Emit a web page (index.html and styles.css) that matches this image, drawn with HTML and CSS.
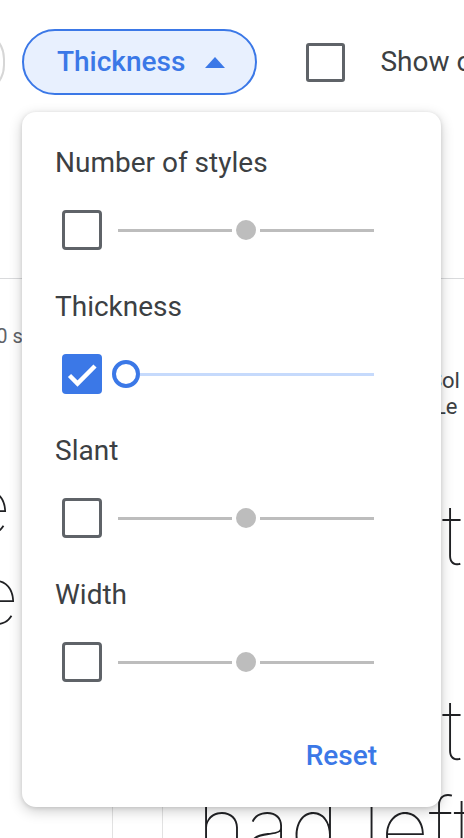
FILE: index.html
```html
<!DOCTYPE html>
<html lang="en">
<head>
<meta charset="utf-8">
<title>Font filters</title>
<link rel="stylesheet" href="styles.css">
</head>
<body>
<div class="page">
  <header class="toolbar">
    <button class="chip chip-prev" aria-label="Previous filter"></button>
    <button class="chip chip-active">Thickness
      <svg class="caret" viewBox="0 0 20 11" aria-hidden="true"><polygon points="10,0 20,11 0,11"/></svg>
    </button>
    <label class="toggle"><span class="box"></span><span class="toggle-text">Show only variable fonts</span></label>
  </header>

  <div class="divider"></div>

  <main class="grid">
    <article class="card card-left">
      <div class="meta meta-left">10 styles</div>
      <div class="sample sample-left">
        <div class="ln ln-a">the</div>
        <div class="ln ln-b">the</div>
      </div>
    </article>
    <article class="card card-mid">
      <div class="meta meta-mid">
        <div>Sol</div>
        <div class="meta-l2">Le</div>
      </div>
      <div class="sample sample-mid">
        <div class="ln ln-t">the</div>
        <div class="ln ln-empty">&nbsp;</div>
        <div class="ln ln-t">to</div>
        <div class="ln">had left</div>
      </div>
    </article>
  </main>

  <section class="popup" aria-label="Thickness filters">
    <div class="group">
      <div class="group-label">Number of styles</div>
      <div class="control">
        <span class="check"></span>
        <div class="slider">
          <span class="track"></span><span class="thumb"></span><span class="track"></span>
        </div>
      </div>
    </div>
    <div class="group">
      <div class="group-label">Thickness</div>
      <div class="control">
        <span class="check checked"><svg viewBox="0 0 40 40" aria-hidden="true"><path d="M7.5 21.5 L15.5 29.5 L33 12"/></svg></span>
        <div class="slider slider-on">
          <span class="ring"></span><span class="track track-on"></span>
        </div>
      </div>
    </div>
    <div class="group">
      <div class="group-label">Slant</div>
      <div class="control">
        <span class="check"></span>
        <div class="slider">
          <span class="track"></span><span class="thumb"></span><span class="track"></span>
        </div>
      </div>
    </div>
    <div class="group">
      <div class="group-label">Width</div>
      <div class="control">
        <span class="check"></span>
        <div class="slider">
          <span class="track"></span><span class="thumb"></span><span class="track"></span>
        </div>
      </div>
    </div>
    <div class="actions"><button class="reset">Reset</button></div>
  </section>
</div>
</body>
</html>
```

FILE: styles.css
```css
* { box-sizing: border-box; }

html, body {
  margin: 0;
  padding: 0;
  background: #ffffff;
}

body {
  font-family: Roboto, "Noto Sans", "Liberation Sans", sans-serif;
  color: #3c4043;
}

.page {
  position: relative;
  width: 464px;
  height: 838px;
  overflow: hidden;
}

/* ---------- toolbar ---------- */
.toolbar {
  display: flex;
  align-items: center;
  padding-top: 29px;
  height: 95px;
}

.chip {
  font: inherit;
  height: 66px;
  border-radius: 33px;
  background: #fff;
  padding: 0;
  flex: none;
}

.chip-prev {
  width: 60px;
  margin-left: -55px;
  border: 2px solid #d6d6d6;
}

.chip-active {
  display: flex;
  align-items: center;
  margin-left: 17px;
  padding: 0 30px 0 33px;
  border: 2px solid #3b78e7;
  background: #e8f0fe;
  color: #3b78e7;
  font-size: 28px;
  font-weight: 500;
  line-height: 36px;
}

.caret {
  width: 20px;
  height: 11px;
  margin-left: 20px;
  fill: #3b78e7;
}

.toggle {
  display: flex;
  align-items: center;
  margin-left: 49px;
  flex: none;
}

.box {
  width: 39px;
  height: 39px;
  border: 3px solid #5f6368;
  border-radius: 3px;
  flex: none;
}

.toggle-text {
  margin-left: 35px;
  font-size: 28px;
  line-height: 36px;
  white-space: nowrap;
  color: #3c4043;
}

.divider {
  margin-top: 183px;
  height: 1px;
  background: #d9dadc;
}

/* ---------- background cards ---------- */
.grid {
  display: flex;
  gap: 49px;
  height: 560px;
}

.card {
  flex: none;
}

.card-left {
  width: 113px;
  border-right: 1px solid #e2e2e2;
  padding-top: 45px;
}

.card-mid {
  flex: 1;
  border-left: 1px solid #e2e2e2;
  padding: 89px 0 0 34px;
}

.meta {
  white-space: nowrap;
}

.meta-left {
  font-size: 20px;
  line-height: 24px;
  color: #5f6368;
  margin-left: -15px;
}

.meta-mid {
  font-size: 22px;
  line-height: 26px;
  margin-left: 232px;
  color: #3c4043;
}

.meta-l2 {
  margin-left: 5px;
}

.sample {
  font-family: Inter, Lato, "Noto Sans", sans-serif;
  font-weight: 100;
  color: #202124;
  white-space: nowrap;
}

.sample-left {
  font-size: 80px;
  line-height: 90px;
  margin-top: 112px;
}

.ln-a { margin-left: -101px; }
.ln-b { margin-left: -93px; }

.sample-mid {
  font-size: 84px;
  line-height: 97.5px;
  margin-top: 66px;
}

.ln-t { padding-left: 245px; }

/* ---------- popup ---------- */
.popup {
  position: absolute;
  left: 22px;
  top: 112px;
  width: 419px;
  padding: 33px;
  background: #fff;
  border-radius: 14px;
  box-shadow: 0 4px 14px rgba(0, 0, 0, 0.2), 0 1px 4px rgba(0, 0, 0, 0.12);
}

.group + .group {
  margin-top: 39px;
}

.group-label {
  font-size: 28px;
  line-height: 36px;
  color: #3c4043;
}

.control {
  display: flex;
  align-items: center;
  height: 40px;
  margin-top: 29px;
}

.check {
  width: 40px;
  height: 40px;
  margin-left: 7px;
  border: 3px solid #5f6368;
  border-radius: 4px;
  flex: none;
  display: flex;
}

.check.checked {
  border: none;
  background: #3b78e7;
}

.check svg {
  width: 40px;
  height: 40px;
  fill: none;
  stroke: #fff;
  stroke-width: 4.5;
}

.slider {
  display: flex;
  align-items: center;
  width: 256px;
  height: 40px;
  margin-left: 16px;
}

.track {
  flex: 1;
  height: 3px;
  background: #bdbdbd;
}

.thumb {
  width: 20px;
  height: 20px;
  margin: 0 4px;
  border-radius: 50%;
  background: #bdbdbd;
  flex: none;
}

.ring {
  width: 28px;
  height: 28px;
  margin-left: -6px;
  border-radius: 50%;
  border: 4px solid #3b78e7;
  background: #fff;
  flex: none;
}

.track-on {
  background: #c6dafc;
}

.actions {
  display: flex;
  justify-content: flex-end;
  margin-top: 56px;
  padding-right: 31px;
}

.reset {
  font: inherit;
  font-size: 28px;
  line-height: 36px;
  font-weight: 500;
  color: #3b78e7;
  background: none;
  border: none;
  padding: 0;
}
```
